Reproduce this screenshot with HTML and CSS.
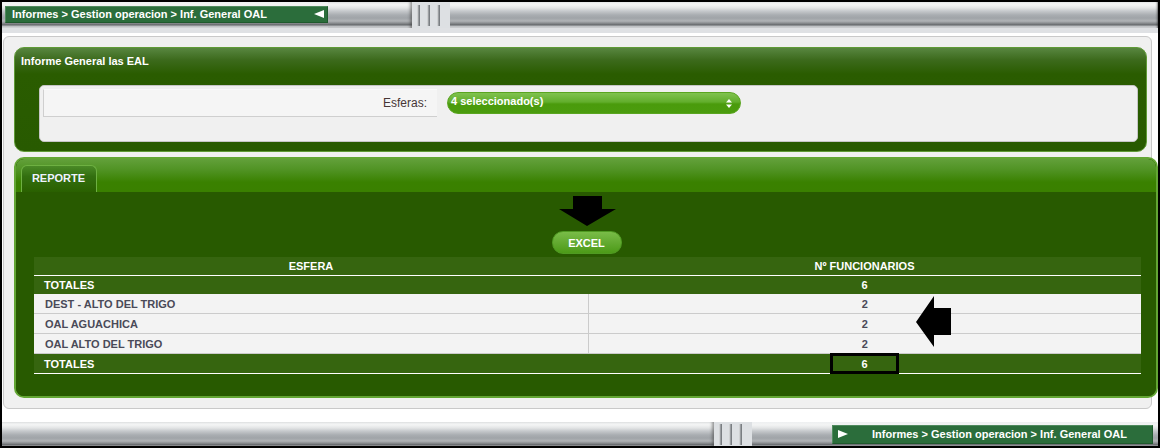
FILE: index.html
```html
<!DOCTYPE html>
<html lang="es">
<head>
<meta charset="utf-8">
<title>Inf. General OAL</title>
<link rel="stylesheet" href="styles.css">
</head>
<body>
<div class="frame">
  <div class="bar bar-top">
    <div class="crumb crumb-top">
      <span class="crumb-text">Informes &gt; Gestion operacion &gt; Inf. General OAL</span>
      <svg class="crumb-tri" width="10" height="8" viewBox="0 0 10 8"><polygon points="0,4 10,0 10,8" fill="#fff"/></svg>
    </div>
    <div class="bar-spacer-top"></div>
    <div class="grip"><i></i><i></i><i></i></div>
    <div class="bar-fill bar-end"></div>
  </div>
  <div class="strip"></div>
  <div class="content">
    <div class="panel panel-filter">
      <div class="panel-title">Informe General las EAL</div>
      <div class="filter-box">
        <div class="filter-row">
          <div class="label-cell">Esferas:</div>
          <div class="select">
            <span>4 seleccionado(s)</span>
            <svg class="sel-arrows" width="6" height="9" viewBox="0 0 6 9"><polygon points="3,0 6,3.5 0,3.5" fill="#fff"/><polygon points="0,5.5 6,5.5 3,9" fill="#fff"/></svg>
          </div>
        </div>
      </div>
    </div>
    <div class="panel panel-report">
      <div class="tabs"><div class="tab">REPORTE</div></div>
      <div class="report-body">
        <svg class="arrow-down" width="59" height="31" viewBox="0 0 59 31"><polygon points="15,0 44,0 44,13 58,13 29,30 1,13 15,13" fill="#000"/></svg>
        <button class="excel">EXCEL</button>
        <table class="grid">
          <thead>
            <tr class="head"><th class="c1">ESFERA</th><th class="c2">Nº FUNCIONARIOS</th></tr>
          </thead>
          <tbody>
            <tr class="total"><td class="c1">TOTALES</td><td class="c2">6</td></tr>
            <tr class="data"><td class="c1">DEST - ALTO DEL TRIGO</td><td class="c2">2</td></tr>
            <tr class="data"><td class="c1">OAL AGUACHICA</td><td class="c2">2</td></tr>
            <tr class="data"><td class="c1">OAL ALTO DEL TRIGO</td><td class="c2">2</td></tr>
            <tr class="total last"><td class="c1">TOTALES</td><td class="c2">6</td></tr>
          </tbody>
        </table>
        <div class="highlight"></div>
        <svg class="arrow-left" width="36" height="52" viewBox="0 0 36 52"><polygon points="0,26 18,0 18,12 35,12 35,39 18,39 18,51" fill="#000"/></svg>
      </div>
    </div>
  </div>
  <div class="bar bar-bottom">
    <div class="bar-spacer-bottom"></div>
    <div class="grip"><i></i><i></i><i></i></div>
    <div class="bar-fill"></div>
    <div class="crumb crumb-bottom">
      <svg class="crumb-tri-r" width="10" height="8" viewBox="0 0 10 8"><polygon points="0,0 10,4 0,8" fill="#fff"/></svg>
      <span class="crumb-text">Informes &gt; Gestion operacion &gt; Inf. General OAL</span>
    </div>
  </div>
</div>
</body>
</html>
```
FILE: styles.css
```css
html, body {
  margin: 0;
  padding: 0;
  background: #fff;
}
body {
  font-family: "Liberation Sans", Arial, sans-serif;
}
.frame {
  width: 1160px;
  height: 448px;
  box-sizing: border-box;
  border: 2px solid #000;
  display: flex;
  flex-direction: column;
  background: #fff;
  overflow: hidden;
}

/* grey toolbars */
.bar {
  display: flex;
  align-items: center;
  flex: none;
  background: linear-gradient(to bottom, #eef0f1 0px, #f3f4f4 3px, #e2e4e5 6px, #c6c9cc 9px, #a9adb1 13px, #a0a4a8 16px, #b0b3b6 19px, #8d9093 21px, #64676a 23px, #b7babd 24px, #d7d9db 26px);
}
.bar-top {
  height: 26px;
}
.bar-bottom {
  height: 24px;
  margin-top: 13px;
}
.crumb {
  box-sizing: border-box;
  height: 17px;
  background: #2b6d3b;
  border: 1px solid #1f5a2d;
  border-top-color: #4f8a5e;
  border-left-color: #4f8a5e;
  display: flex;
  align-items: center;
  color: #fff;
  font-weight: bold;
  font-size: 11px;
}
.crumb-top {
  width: 323px;
  margin-left: 3px;
  margin-top: -2px;
  padding-left: 6px;
  padding-right: 3px;
}
.crumb-top .crumb-text {
  flex: 1;
}
.crumb-tri {
  display: block;
}
.crumb-bottom {
  width: 321px;
  height: 19px;
  margin-right: 5px;
  padding-left: 5px;
}
.crumb-tri-r {
  display: block;
  margin-right: 24px;
}
.bar-spacer-top {
  width: 84px;
  height: 100%;
  box-shadow: inset -3px 0 3px -1px rgba(60, 60, 60, 0.5);
}
.bar-spacer-bottom {
  width: 712px;
  height: 100%;
  box-shadow: inset -3px 0 3px -1px rgba(60, 60, 60, 0.5);
}
.bar-fill {
  flex: 1;
  height: 100%;
}
.bar-end {
  box-shadow: inset -2px 0 2px -1px rgba(40, 40, 40, 0.6);
}
.grip {
  width: 38px;
  height: 100%;
  background: #dde0e3;
  display: flex;
  align-items: center;
  gap: 7px;
  padding-left: 5px;
  box-sizing: border-box;
}
.grip i {
  display: block;
  width: 3px;
  height: 21px;
  background: linear-gradient(to right, #e8e9ea, #8c9094 60%, #6d7175);
}

.strip {
  height: 5px;
  flex: none;
  background: #dfe1e4;
}

/* main content */
.content {
  flex: none;
  box-sizing: border-box;
  height: 373px;
  margin: 3px 0 0 1px;
  width: 1149px;
  background: #f0f0f0;
  border: 1px solid #c9c9c9;
  border-radius: 6px;
  padding: 10px 0 0 10px;
  display: flex;
  flex-direction: column;
  gap: 5px;
}
.panel {
  box-sizing: border-box;
  border-radius: 10px;
  flex: none;
}
.panel-filter {
  width: 1133px;
  height: 105px;
  border: 1px solid #5f9a36;
  background: linear-gradient(to bottom, #588640 0px, #3c6a1c 12px, #2a5c00 26px, #285a00 100%);
  padding: 0 8px 0 24px;
}
.panel-title {
  color: #fff;
  font-weight: bold;
  font-size: 11px;
  height: 37px;
  line-height: 26px;
  margin-left: -18px;
}
.filter-box {
  box-sizing: border-box;
  height: 57px;
  background: #f0f0f0;
  border: 1px solid #c6c6c6;
  border-radius: 5px;
  padding: 3px 0 0 3px;
}
.filter-row {
  display: flex;
  align-items: flex-start;
}
.label-cell {
  box-sizing: border-box;
  width: 394px;
  height: 28px;
  background: #f5f5f5;
  border-left: 1px solid #cfcfcf;
  border-bottom: 1px solid #cfcfcf;
  border-top: 1px solid #fafafa;
  text-align: right;
  padding-right: 10px;
  font-size: 12px;
  line-height: 26px;
  color: #473636;
}
.select {
  box-sizing: border-box;
  width: 294px;
  height: 22px;
  margin: 3px 0 0 10px;
  border-radius: 11px;
  border: 1px solid #5aa520;
  background: linear-gradient(to bottom, #80c24f 0%, #62ae2c 45%, #4a9b0c 55%, #4b9c0e 100%);
  color: #fff;
  font-weight: bold;
  font-size: 11px;
  display: flex;
  align-items: flex-start;
  justify-content: space-between;
  padding: 2px 8px 0 3px;
}
.sel-arrows {
  display: block;
  margin-top: 4px;
}

/* report panel */
.panel-report {
  width: 1144px;
  height: 241px;
  border: 2px solid #63a634;
  background: #285a00;
  display: flex;
  flex-direction: column;
  overflow: hidden;
}
.tabs {
  height: 33px;
  flex: none;
  box-sizing: border-box;
  background: linear-gradient(to bottom, #62a03a 0%, #4f9222 35%, #3a8100 70%, #3a8000 100%);
  border-radius: 8px 8px 0 0;
  padding: 6px 0 0 5px;
  display: flex;
  align-items: flex-end;
}
.tab {
  box-sizing: border-box;
  width: 76px;
  height: 27px;
  border: 1px solid #6eb042;
  border-bottom: none;
  border-radius: 6px 6px 0 0;
  background: linear-gradient(to bottom, #4a8a26 0%, #336f10 40%, #2a6000 100%);
  color: #eef3ff;
  font-size: 11px;
  font-weight: bold;
  line-height: 25px;
  text-align: center;
  padding-right: 1px;
}
.report-body {
  position: relative;
  flex: 1;
  background: #285a00;
  padding: 39px 15px 0 18px;
  display: flex;
  flex-direction: column;
  align-items: center;
}
.excel {
  box-sizing: border-box;
  width: 70px;
  height: 23px;
  margin: 0 0 0 -2px;
  border-radius: 11px;
  border: 1px solid #4f9a22;
  background: linear-gradient(to bottom, #79bc48 0%, #63aa31 50%, #4c9b17 100%);
  color: #fff;
  font-family: "Liberation Sans", Arial, sans-serif;
  font-weight: bold;
  font-size: 11px;
  padding: 0;
}
.grid {
  margin-top: 3px;
  width: 1107px;
  border-collapse: collapse;
  font-size: 11px;
  font-weight: bold;
  table-layout: fixed;
}
.grid .c1 {
  width: 554px;
}
.grid th {
  height: 18px;
  padding: 0;
  color: #fff;
  text-align: center;
  background: #36650f;
  border-bottom: 1px solid #fff;
}
.grid td {
  padding: 0;
}
.grid .total td {
  height: 18px;
  background: #36650f;
  color: #fff;
}
.grid .total.last td {
  height: 19px;
  border-bottom: 1px solid #fff;
}
.grid .total .c1 {
  padding-left: 10px;
  text-align: left;
}
.grid .c2 {
  text-align: center;
}
.grid .data td {
  height: 19px;
  background: #f3f3f3;
  color: #4a4a58;
  border-bottom: 1px solid #cbcbcb;
}
.grid .data .c1 {
  padding-left: 11px;
  border-right: 1px solid #cbcbcb;
}
.arrow-down {
  position: absolute;
  left: 542px;
  top: 4px;
}
.arrow-left {
  position: absolute;
  left: 900px;
  top: 104px;
}
.highlight {
  position: absolute;
  left: 814px;
  top: 161px;
  width: 69px;
  height: 21px;
  box-sizing: border-box;
  border: 3px solid #000;
}
```
